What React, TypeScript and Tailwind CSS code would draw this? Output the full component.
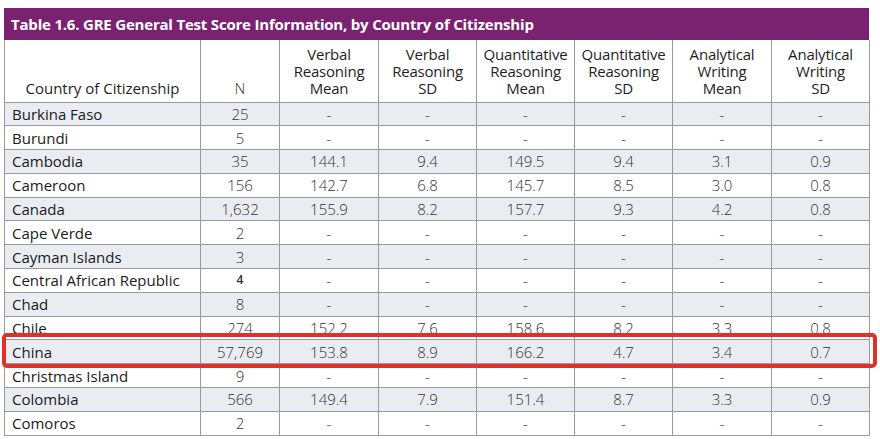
const rows: [string, string, string, string, string, string, string, string][] = [
  ["Burkina Faso", "25", "-", "-", "-", "-", "-", "-"],
  ["Burundi", "5", "-", "-", "-", "-", "-", "-"],
  ["Cambodia", "35", "144.1", "9.4", "149.5", "9.4", "3.1", "0.9"],
  ["Cameroon", "156", "142.7", "6.8", "145.7", "8.5", "3.0", "0.8"],
  ["Canada", "1,632", "155.9", "8.2", "157.7", "9.3", "4.2", "0.8"],
  ["Cape Verde", "2", "-", "-", "-", "-", "-", "-"],
  ["Cayman Islands", "3", "-", "-", "-", "-", "-", "-"],
  ["Central African Republic", "4", "-", "-", "-", "-", "-", "-"],
  ["Chad", "8", "-", "-", "-", "-", "-", "-"],
  ["Chile", "274", "152.2", "7.6", "158.6", "8.2", "3.3", "0.8"],
  ["China", "57,769", "153.8", "8.9", "166.2", "4.7", "3.4", "0.7"],
  ["Christmas Island", "9", "-", "-", "-", "-", "-", "-"],
  ["Colombia", "566", "149.4", "7.9", "151.4", "8.7", "3.3", "0.9"],
  ["Comoros", "2", "-", "-", "-", "-", "-", "-"],
];

const headers = [
  ["Verbal", "Reasoning", "Mean"],
  ["Verbal", "Reasoning", "SD"],
  ["Quantitative", "Reasoning", "Mean"],
  ["Quantitative", "Reasoning", "SD"],
  ["Analytical", "Writing", "Mean"],
  ["Analytical", "Writing", "SD"],
];

const widths = [196, 79, 99, 98, 98, 98, 99, 98];

export default function App() {
  return (
    <div className="w-[880px] h-[439px] overflow-hidden bg-white pl-[4px] pt-[8px] font-['Open_Sans',sans-serif] relative">
      <div className="w-[865px]">
        <div className="h-[32px] bg-[#7a2270] flex items-center pl-[7px] text-white font-bold text-[15px] tracking-[-0.2px]">
          Table 1.6. GRE General Test Score Information, by Country of Citizenship
        </div>
        <table className="table-fixed border-collapse w-[865px] text-[15px]">
          <colgroup>
            {widths.map((w, i) => (
              <col key={i} style={{ width: w }} />
            ))}
          </colgroup>
          <thead>
            <tr className="h-[62px] text-[#1e1e1e]">
              <th className="border border-[#9a9a9a] border-t-0 align-bottom text-center font-normal pb-[5px] leading-[17px]">
                Country of Citizenship
              </th>
              <th className="border border-[#9a9a9a] border-t-0 align-bottom text-center font-light text-[#333] pb-[5px] leading-[17px]">
                N
              </th>
              {headers.map((h, i) => (
                <th
                  key={i}
                  className="border border-[#9a9a9a] border-t-0 align-bottom text-center font-normal pb-[5px] leading-[17px] tracking-[-0.2px]"
                >
                  {h.map((l) => (
                    <div key={l}>{l}</div>
                  ))}
                </th>
              ))}
            </tr>
          </thead>
          <tbody>
            {rows.map((r, i) => (
              <tr key={r[0]} className={`h-[23.8px] ${i % 2 === 0 ? "bg-[#e9edf2]" : "bg-white"}`}>
                <td className="border border-[#9a9a9a] pl-[7px] text-[#1a1a1a] leading-[20px] py-0 whitespace-nowrap">
                  {r[0]}
                </td>
                {r.slice(1).map((v, j) => (
                  <td
                    key={j}
                    className={`border border-[#9a9a9a] text-center leading-[20px] py-0 ${
                      r[0] === "Central African Republic" && j === 0
                        ? "text-[12px] font-semibold text-[#333]"
                        : "text-[#333] font-light"
                    }`}
                  >
                    {v}
                  </td>
                ))}
              </tr>
            ))}
          </tbody>
        </table>
      </div>
      <div className="absolute left-[2px] top-[333px] w-[875px] h-[35px] border-[4px] border-[#e0302a] rounded-[5px]" />
    </div>
  );
}
